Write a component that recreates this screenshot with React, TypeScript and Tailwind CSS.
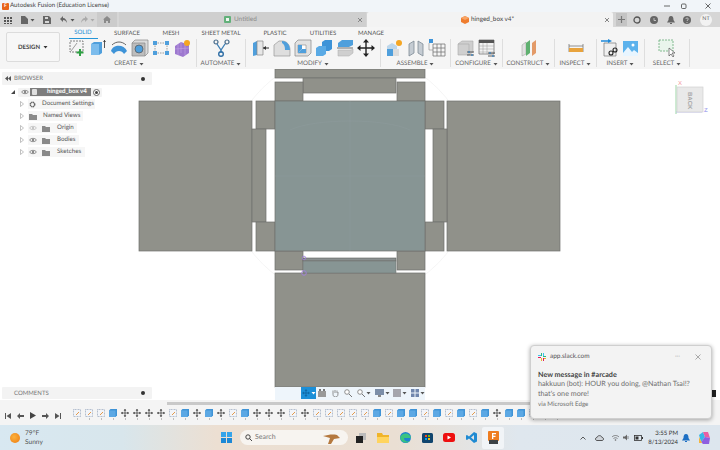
import type { ReactNode } from "react";

const FONT = "[font-family:'Lato','Liberation_Sans',sans-serif] [text-rendering:geometricPrecision]";

function Ico({ children, w = 18, h = 18, vb, className = "" }: { children: ReactNode; w?: number; h?: number; vb?: string; className?: string }) {
  return (
    <svg width={w} height={h} viewBox={vb ?? `0 0 ${w} ${h}`} className={`shrink-0 ${className}`}>
      {children}
    </svg>
  );
}

function Caret({ color = "#555" }: { color?: string }) {
  return (
    <svg width="5" height="4" viewBox="0 0 5 4" className="shrink-0">
      <path d="M0.5 1h4L2.5 3.5z" fill={color} />
    </svg>
  );
}

function SketchIcon() {
  return (
    <Ico>
      <path d="M2 2h13v11H2z" fill="#f4f4f4" stroke="#666" strokeDasharray="2 1" strokeWidth="0.8" />
      <path d="M3 12 9 4" stroke="#888" strokeWidth="0.8" />
      <path d="M12 10v7M8.500 13.500h7" stroke="#2ea043" strokeWidth="2" />
    </Ico>
  );
}

function ExtrudeIcon() {
  return (
    <Ico>
      <path d="M2 5 5 3h8v11l-3 2H2z" fill="#4f9fdc" />
      <path d="M2 5h8v11H2z" fill="#7cbcec" />
      <path d="M15.500 1v8" stroke="#444" strokeWidth="0.9" />
      <path d="M14 3l1.500-2L17 3z" fill="#444" />
    </Ico>
  );
}

function Elbow() {
  return (
    <Ico>
      <path d="M1 12C3 5 14 5 17 12l-3 3C12 11 6 11 4 15z" fill="#3f94d8" />
      <path d="M2 6C6 2 12 2 16 6" stroke="#555" fill="none" strokeWidth="0.9" />
    </Ico>
  );
}

function HoleIcon() {
  return (
    <Ico>
      <path d="M1 4l3-3h13v13l-3 3z" fill="#dcdcdc" stroke="#888" strokeWidth="0.7" />
      <path d="M1 4h13v13H1z" fill="#bdbdbd" stroke="#888" strokeWidth="0.7" />
      <circle cx="8" cy="10" r="4" fill="#4f9fdc" stroke="#555" strokeWidth="0.7" />
    </Ico>
  );
}

function PointsIcon() {
  return (
    <Ico>
      <path d="M3 4h12M3 14h12M3 4v10M15 4v10" stroke="#777" strokeDasharray="1.500 1" strokeWidth="0.7" />
      <rect x="1" y="2" width="4" height="4" fill="#4f9fdc" />
      <rect x="13" y="2" width="4" height="4" fill="#4f9fdc" />
      <rect x="1" y="12" width="4" height="4" fill="#4f9fdc" />
      <rect x="13" y="12" width="4" height="4" fill="#4f9fdc" />
    </Ico>
  );
}

function FormIcon() {
  return (
    <Ico>
      <path d="M2 7 8 3l8 3v8l-6 4-8-3z" fill="#9d78cf" />
      <path d="M8 3v11M2 10l14-1M5 5v11M12 4v12" stroke="#c3a6e6" strokeWidth="0.6" />
      <circle cx="14" cy="4" r="3" fill="#f5a623" />
    </Ico>
  );
}

function Automate() {
  return (
    <Ico>
      <circle cx="4" cy="3" r="2" fill="none" stroke="#4a6d8c" strokeWidth="1.200" />
      <circle cx="15" cy="3" r="2" fill="none" stroke="#4a6d8c" strokeWidth="1.200" />
      <path d="M5 5l4 6 4-6" fill="none" stroke="#3d7fb5" strokeWidth="1.300" />
      <path d="M9 11v3" stroke="#3d7fb5" strokeWidth="1.300" />
      <circle cx="9" cy="15" r="2.300" fill="none" stroke="#2f6ea5" strokeWidth="1.400" />
    </Ico>
  );
}

function PressPull() {
  return (
    <Ico>
      <path d="M1 4l4-2v14l-4 1z" fill="#4f9fdc" />
      <path d="M5 2h6v14H5z" fill="#e7e7e7" stroke="#888" strokeWidth="0.7" />
      <path d="M11 9h6" stroke="#333" strokeWidth="1" />
      <path d="M11 9l3-2v4z" fill="#333" />
    </Ico>
  );
}

function Fillet() {
  return (
    <Ico>
      <path d="M1 17V6l5-4h3c5 0 8 4 8 9v6z" fill="#dedede" stroke="#999" strokeWidth="0.7" />
      <path d="M9 2c5 0 8 4 8 9h-5C12 7 11 5 9 4z" fill="#4f9fdc" />
    </Ico>
  );
}

function Shell() {
  return (
    <Ico>
      <path d="M1 4l3-3h13v13l-3 3H1z" fill="#e2e2e2" stroke="#888" strokeWidth="0.7" />
      <path d="M4 6h8v8H4z" fill="#fff" stroke="#888" strokeWidth="0.6" />
      <path d="M4 14l4-4h4v4z" fill="#4f9fdc" />
      <path d="M4 6v8l4-4V6z" fill="#4f9fdc" />
    </Ico>
  );
}

function Combine() {
  return (
    <Ico>
      <path d="M7 3l3-2h7v9l-3 2H7z" fill="#3d93d8" />
      <path d="M1 9l3-2h7v8l-3 2H1z" fill="#5aaae5" />
    </Ico>
  );
}

function SplitFace() {
  return (
    <Ico>
      <path d="M2 4l4-3h11v5l-4 2H2z" fill="#4f9fdc" />
      <path d="M1 9h16" stroke="#9a9a9a" strokeWidth="1.500" />
      <path d="M2 11h13l2-1v4l-4 3H2z" fill="#cfcfcf" stroke="#aaa" strokeWidth="0.5" />
    </Ico>
  );
}

function MoveIcon({ size = 18 }: { size?: number }) {
  return (
    <Ico w={size} h={size} vb="0 0 18 18">
      <path d="M9 1v16M1 9h16" stroke="#222" strokeWidth="1.400" />
      <path d="M9 0l3 3.500H6zM9 18l3-3.500H6zM0 9l3.500-3v6zM18 9l-3.500-3v6z" fill="#222" />
    </Ico>
  );
}

function NewComponent() {
  return (
    <Ico>
      <path d="M1 7l5-3 5 3v9H1z" fill="#bdd6ea" />
      <path d="M1 10h6v7H1z" fill="#4f9fdc" />
      <path d="M7 10h6v7H7z" fill="#ddd" />
      <circle cx="13" cy="4" r="3" fill="#f5a623" />
    </Ico>
  );
}

function Joint() {
  return (
    <Ico>
      <path d="M2 5l5-3v12l-5 3zM16 5l-5-3v12l5 3z" fill="#c5ccd3" stroke="#7d8a96" strokeWidth="0.8" />
    </Ico>
  );
}

function TableIcon() {
  return (
    <Ico>
      <rect x="1" y="0" width="4" height="4" fill="#3d93d8" />
      <path d="M5 5h12v12H5zM5 9h12M5 13h12M9 5v12M13 5v12" fill="none" stroke="#777" strokeWidth="0.8" />
      <path d="M1 4v7h4" fill="none" stroke="#888" strokeWidth="0.6" />
    </Ico>
  );
}

function ConfigBox() {
  return (
    <Ico>
      <path d="M1 5l4-3h11v11l-4 3H1z" fill="#cfcfcf" stroke="#aaa" strokeWidth="0.6" />
      <path d="M1 5h11v11" fill="none" stroke="#aaa" strokeWidth="0.6" />
      <path d="M10 13h7M10 16h7" stroke="#333" strokeWidth="0.8" />
      <path d="M12 12v2M15 15v2" stroke="#2f7fc1" strokeWidth="1.200" />
    </Ico>
  );
}

function ConfigTable() {
  return (
    <Ico>
      <path d="M1 1h15v14H1z" fill="#f3f3f3" stroke="#666" strokeWidth="0.7" />
      <path d="M1 1h15v3H1z" fill="#555" />
      <path d="M1 7h15M1 10h15M1 13h15M5 4v11M9 4v11" stroke="#999" strokeWidth="0.5" />
      <path d="M10 14h7M10 17h7" stroke="#333" strokeWidth="0.8" />
      <path d="M12 13v2M15 16v2" stroke="#2f7fc1" strokeWidth="1.200" />
    </Ico>
  );
}

function Planes() {
  return (
    <Ico>
      <path d="M2 6l4-3v12l-4 2z" fill="#e2e2e2" stroke="#999" strokeWidth="0.5" />
      <path d="M6 4l4-3v13l-4 3z" fill="#5fb070" />
      <path d="M12 4l4-3v13l-4 3z" fill="#e39a68" />
    </Ico>
  );
}

function Measure() {
  return (
    <Ico>
      <path d="M2 5v8M16 5v8M2 7h14" stroke="#777" strokeWidth="0.8" />
      <rect x="2" y="9" width="14" height="4" fill="#e8a33d" />
    </Ico>
  );
}

function InsertDerive() {
  return (
    <Ico>
      <path d="M3 4h12v13H3z" fill="#efefef" stroke="#777" strokeWidth="0.7" />
      <path d="M0 2h9" stroke="#1e88d8" strokeWidth="1.500" />
      <path d="M7 0l4 2-4 2z" fill="#1e88d8" />
      <circle cx="10" cy="14" r="2" fill="none" stroke="#222" strokeWidth="1.100" />
      <circle cx="14" cy="11" r="2" fill="none" stroke="#222" strokeWidth="1.100" />
    </Ico>
  );
}

function InsertImage() {
  return (
    <Ico>
      <rect x="1" y="2" width="15" height="15" fill="#5db2ec" />
      <circle cx="11" cy="6" r="1.500" fill="#fff" />
      <path d="M1 14l5-6 4 5 2-2 4 3v3H1z" fill="#e8f5ff" />
    </Ico>
  );
}

function SelectIcon() {
  return (
    <Ico>
      <rect x="1" y="1" width="14" height="11" fill="#e9f5ec" stroke="#67ab79" strokeDasharray="2 1" strokeWidth="0.8" />
      <path d="M11 9l0 8 2-2 2 3 1-1-2-3h3z" fill="#fff" stroke="#555" strokeWidth="0.7" />
    </Ico>
  );
}

const groups = [
  { label: "CREATE", w: "w-[135px]", icons: [<SketchIcon key="a" />, <ExtrudeIcon key="b" />, <Elbow key="c" />, <HoleIcon key="d" />, <PointsIcon key="e" />, <FormIcon key="f" />] },
  { label: "AUTOMATE", w: "w-[49px]", icons: [<Automate key="a" />] },
  { label: "MODIFY", w: "w-[135px]", icons: [<PressPull key="a" />, <Fillet key="b" />, <Shell key="c" />, <Combine key="d" />, <SplitFace key="e" />, <MoveIcon key="f" />] },
  { label: "ASSEMBLE", w: "w-[70px]", icons: [<NewComponent key="a" />, <Joint key="b" />, <TableIcon key="c" />] },
  { label: "CONFIGURE", w: "w-[52px]", icons: [<ConfigBox key="a" />, <ConfigTable key="b" />] },
  { label: "CONSTRUCT", w: "w-[52px]", icons: [<Planes key="a" />] },
  { label: "INSPECT", w: "w-[42px]", icons: [<Measure key="a" />] },
  { label: "INSERT", w: "w-[48px]", icons: [<InsertDerive key="a" />, <InsertImage key="b" />] },
  { label: "SELECT", w: "w-[45px]", icons: [<SelectIcon key="a" />] },
];

const tabs = [
  { label: "SOLID", w: "w-[42px]" },
  { label: "SURFACE", w: "w-[46px]" },
  { label: "MESH", w: "w-[42px]" },
  { label: "SHEET METAL", w: "w-[58px]" },
  { label: "PLASTIC", w: "w-[50px]" },
  { label: "UTILITIES", w: "w-[46px]" },
  { label: "MANAGE", w: "w-[50px]" },
];

function TitleBar() {
  return (
    <div className="flex h-[12px] items-center bg-[#f1f5f9] pl-[2px] text-[#444]">
      <div className="flex h-[7px] w-[7px] items-center justify-center rounded-[1px] bg-[#e8641b] text-[5px] font-bold leading-none text-white">F</div>
      <span className="ml-[1px] whitespace-nowrap text-[6.200px] leading-none">Autodesk Fusion (Education License)</span>
      <div className="ml-auto flex items-center">
        <Ico w={6} h={6}><path d="M0 3h6" stroke="#444" strokeWidth="0.8" /></Ico>
        <Ico w={6} h={6} className="ml-[11px]"><rect x="0.500" y="1" width="4.500" height="4.500" rx="1" fill="none" stroke="#444" strokeWidth="0.8" /></Ico>
        <Ico w={6} h={6} className="ml-[18px] mr-[9px]"><path d="M0.500 0.500l5 5M5.500 0.500l-5 5" stroke="#444" strokeWidth="0.8" /></Ico>
      </div>
    </div>
  );
}

function TabBar() {
  return (
    <div className="flex h-[15px] items-center bg-[#d6d6d6]">
      <div className="flex w-[97px] items-center pl-[4px]">
        <Ico w={8} h={8}><path d="M0 1h2v2H0zM3 1h2v2H3zM6 1h2v2H6zM0 4h2v2H0zM3 4h2v2H3zM6 4h2v2H6zM0 7h2v1H0zM3 7h2v1H3zM6 7h2v1H6z" fill="#555" /></Ico>
        <Ico w={7} h={8} className="ml-[9px]"><path d="M0 0h4l3 3v5H0z" fill="#666" /></Ico>
        <span className="ml-[2px]"><Caret /></span>
        <Ico w={8} h={8} className="ml-[8px]"><path d="M0 0h6l2 2v6H0z" fill="#666" /><path d="M2 1h3v2H2zM2 5h4v2H2z" fill="#d6d6d6" /></Ico>
        <Ico w={8} h={7} className="ml-[9px]"><path d="M3 0 0 3l3 3V4c2 0 3 1 4 3 0-3-2-5-4-5z" fill="#666" /></Ico>
        <span className="ml-[2px]"><Caret /></span>
        <Ico w={8} h={7} className="ml-[5px]"><path d="M5 0l3 3-3 3V4C3 4 2 5 1 7c0-3 2-5 4-5z" fill="#aaa" /></Ico>
        <span className="ml-[2px]"><Caret color="#aaa" /></span>
      </div>
      <div className="flex h-full w-[20px] items-center justify-center bg-[#cbcbcb]">
        <Ico w={8} h={7}><path d="M4 0l4 3.500H7V7H5V5H3v2H1V3.500H0z" fill="#8a8a8a" /></Ico>
      </div>
      <div className="ml-[2px] flex h-full w-[247px] items-center bg-[#cfcfcf] pr-[3px]">
        <div className="ml-[105px] flex items-center gap-[3px] text-[6.400px] text-[#8b8b8b]">
          <span className="h-[7px] w-[7px] rounded-[1px] border-[2px] border-[#62b07a] bg-[#eef5ef]" />
          Untitled
        </div>
        <Ico w={6} h={6} className="ml-auto"><path d="M1 1l4 4M5 1L1 5" stroke="#666" strokeWidth="0.7" /></Ico>
      </div>
      <div className="ml-[1px] flex h-full w-[246px] items-center rounded-t-[2px] bg-[#f3f3f3] pr-[3px]">
        <Ico w={8} h={8} className="ml-[94px]"><path d="M4 0l4 2v4L4 8 0 6V2z" fill="#ef7d2e" /><path d="M0 2l4 2 4-2-4-2z" fill="#f8a566" /></Ico>
        <span className="ml-[2px] text-[6.400px] text-[#444]">hinged_box v4*</span>
        <Ico w={6} h={6} className="ml-auto"><path d="M1 1l4 4M5 1L1 5" stroke="#555" strokeWidth="0.7" /></Ico>
      </div>
      <div className="ml-[3px] flex h-[13px] w-[11px] items-center justify-center bg-[#c4c4c4]">
        <Ico w={7} h={7}><path d="M3.500 0v7M0 3.500h7" stroke="#777" strokeWidth="1.200" /></Ico>
      </div>
      <div className="ml-[6px] flex items-center">
        <Ico w={8} h={8}><circle cx="4" cy="4" r="3" fill="none" stroke="#555" strokeWidth="1.300" /></Ico>
        <Ico w={8} h={8} className="ml-[9px]"><circle cx="4" cy="4" r="4" fill="#666" /><path d="M4 2v2.500h2" stroke="#d6d6d6" strokeWidth="0.8" fill="none" /></Ico>
        <Ico w={8} h={8} className="ml-[9px]"><path d="M4 0c2 0 2.500 2 2.500 4L8 6.500H0L1.500 4C1.500 2 2 0 4 0zM3 7h2v1H3z" fill="#666" /></Ico>
        <Ico w={8} h={8} className="ml-[8px]"><circle cx="4" cy="4" r="4" fill="#666" /><path d="M2.800 3c0-1.500 2.500-1.500 2.500 0 0 1-1.300 1-1.300 2M4 6v1" stroke="#d6d6d6" strokeWidth="0.8" fill="none" /></Ico>
        <div className="ml-[9px] flex h-[12px] w-[12px] items-center justify-center rounded-full bg-[#f2f2f2] text-[5.400px] text-[#666]">NT</div>
      </div>
    </div>
  );
}

function Toolbar() {
  return (
    <div className="flex h-[42px] bg-[#f5f5f5]">
      <div className="ml-[6px] mt-[5px] flex h-[30px] w-[54px] items-center justify-center gap-[3px] rounded-[2px] border border-[#dcdcdc] bg-[#f7f7f7] text-[6px] font-bold text-[#444]">
        DESIGN <Caret color="#333" />
      </div>
      <div className="ml-[2px] flex flex-col">
        <div className="flex h-[12px]">
          {tabs.map((t, i) => (
            <div key={t.label} className={`${t.w} flex h-full items-end justify-center`}>
              <span className={`px-[3px] pb-[1px] text-[6px] leading-[8px] ${i === 0 ? "w-[29px] border-b-[1px] border-[#2596d8] text-center text-[#1d8fd6]" : "text-[#555]"}`}>{t.label}</span>
            </div>
          ))}
        </div>
        <div className="flex h-[30px]">
          {groups.map((g) => (
            <div key={g.label} className={`${g.w} flex h-[28px] flex-col items-center border-r border-[#dedede]`}>
              <div className="flex h-[19px] items-center">
                {g.icons.map((ic, i) => (
                  <div key={i} className="flex w-[21px] justify-center">{ic}</div>
                ))}
              </div>
              <div className="mt-[3px] flex items-center gap-[2px] whitespace-nowrap text-[6.200px] leading-[7px] text-[#666]">
                {g.label} <Caret />
              </div>
            </div>
          ))}
        </div>
      </div>
    </div>
  );
}

function Eye({ faded = false }: { faded?: boolean }) {
  const c = faded ? "#b5b5b5" : "#666";
  return (
    <Ico w={8} h={6}>
      <path d="M0.500 3C2 0.800 6 0.800 7.500 3 6 5.200 2 5.200 0.500 3z" fill="none" stroke={c} strokeWidth="0.7" />
      <circle cx="4" cy="3" r="1" fill={c} />
    </Ico>
  );
}

function Folder() {
  return (
    <Ico w={8} h={7}>
      <path d="M0 1h3l1 1h4v5H0z" fill="#8a8a8a" />
    </Ico>
  );
}

function Arrow() {
  return (
    <Ico w={4} h={6}>
      <path d="M0.500 0.500 3.500 3 0.500 5.500z" fill="none" stroke="#999" strokeWidth="0.6" />
    </Ico>
  );
}

const treeRows = [
  { label: "Origin", faded: true, chip: "w-[49px]" },
  { label: "Bodies", faded: false, chip: "w-[51px]" },
  { label: "Sketches", faded: false, chip: "w-[57px]" },
];

function Browser() {
  return (
    <div className="absolute left-[2px] top-[3px] w-[150px] whitespace-nowrap text-[6.200px] text-[#555]">
      <div className="flex h-[13px] items-center rounded-[1px] bg-[#f3f3f3] px-[3px] text-[#777]">
        <Ico w={6} h={5}><path d="M3 0v5L0 2.500zM6 0v5L3 2.500z" fill="#555" /></Ico>
        <span className="ml-[3px] text-[6px]">BROWSER</span>
        <span className="ml-auto mr-[4px] h-[4px] w-[4px] rounded-full bg-[#333]" />
      </div>
      <div className="mt-[1px] flex h-[12px] items-center pl-[9px]">
        <Ico w={4} h={4}><path d="M4 0v4H0z" fill="#444" /></Ico>
        <div className="ml-[3px] flex h-[9px] items-center rounded-[1px] bg-[#f3f3f3] pl-[3px]">
          <Eye />
          <div className="ml-[1px] flex h-[8px] w-[61px] items-center bg-[#7d7d7d] pl-[2px] text-white">
            <span className="h-[6px] w-[5px] rounded-[1px] bg-[#e0e0e0]" />
            <span className="ml-[10px] text-[6.200px] font-bold leading-none">hinged_box v4</span>
          </div>
          <div className="mx-[2px] flex h-[7px] w-[7px] items-center justify-center rounded-full border border-[#666] bg-white">
            <span className="h-[3px] w-[3px] rounded-full bg-[#444]" />
          </div>
        </div>
      </div>
      <div className="flex h-[12px] items-center pl-[18px]">
        <Arrow />
        <div className="ml-[4px] flex h-[10px] w-[67px] items-center bg-[#f6f6f6] pl-[1px]">
          <Ico w={7} h={7}><circle cx="3.500" cy="3.500" r="2.200" fill="none" stroke="#666" strokeWidth="1.500" strokeDasharray="1.200 0.400" /></Ico>
          <span className="ml-[6px]">Document Settings</span>
        </div>
      </div>
      <div className="flex h-[12px] items-center pl-[18px]">
        <Arrow />
        <div className="ml-[4px] flex h-[10px] w-[55px] items-center bg-[#f6f6f6] pl-[1px]">
          <Folder />
          <span className="ml-[6px]">Named Views</span>
        </div>
      </div>
      {treeRows.map((r) => (
        <div key={r.label} className="flex h-[12px] items-center pl-[18px]">
          <Arrow />
          <div className={`ml-[4px] flex h-[10px] ${r.chip} items-center bg-[#f6f6f6] pl-[1px]`}>
            <Eye faded={r.faded} />
            <span className="ml-[5px]"><Folder /></span>
            <span className="ml-[7px]">{r.label}</span>
          </div>
        </div>
      ))}
    </div>
  );
}

function Drawing() {
  const grey = "#90918a";
  const edge = "#6f716d";
  const top = "#879594";
  return (
    <svg className="absolute inset-0" width="720" height="331" viewBox="0 69 720 331">
      <circle cx="350" cy="176" r="124" fill="none" stroke="#f0f0f0" strokeWidth="0.7" />
      <g fill={grey} stroke={edge} strokeWidth="0.7">
        <rect x="275" y="69" width="150" height="9" />
        <rect x="303" y="78" width="93" height="15" />
        <rect x="275" y="82" width="28" height="19" />
        <rect x="397" y="82" width="28" height="19" />
        <rect x="139" y="101" width="113" height="150" />
        <rect x="447" y="101" width="113" height="150" />
        <rect x="256" y="101" width="19" height="28" />
        <rect x="425" y="101" width="19" height="28" />
        <rect x="252" y="129" width="14" height="93" />
        <rect x="433" y="129" width="14" height="93" />
        <rect x="256" y="222" width="19" height="29" />
        <rect x="425" y="222" width="19" height="29" />
        <rect x="275" y="251" width="28" height="19" />
        <rect x="397" y="251" width="28" height="19" />
        <rect x="275" y="273" width="150" height="114" />
      </g>
      <rect x="275" y="101" width="150" height="150" fill={top} stroke={edge} strokeWidth="0.7" />
      <path d="M350 101v150M275 176h150" stroke="#8f9c9e" strokeWidth="0.4" />
      <path d="M290 130C315 118 385 118 410 130" fill="none" stroke="#8f9c9e" strokeWidth="0.4" />
      <rect x="303" y="258" width="93" height="3" fill="#8a9090" stroke="#5e615e" strokeWidth="0.6" />
      <rect x="303" y="261" width="93" height="12" fill={top} stroke={edge} strokeWidth="0.5" />
      <circle cx="304" cy="258" r="1.800" fill="none" stroke="#a27fdc" strokeWidth="0.8" />
      <circle cx="304" cy="273" r="2.300" fill="none" stroke="#a27fdc" strokeWidth="0.9" />
      <path d="M676 85v29" stroke="#8fd39a" strokeWidth="0.9" />
      <path d="M676 112h26" stroke="#a9a9ee" strokeWidth="0.7" />
      <rect x="677" y="87" width="26" height="25" fill="#e9e9e9" stroke="#d2d2d2" strokeWidth="0.7" />
      <text transform="translate(688 92) rotate(90)" fontSize="6" fontWeight="700" fontFamily="Liberation Sans" fill="#a5a5a5">BACK</text>
      <text x="678" y="85" fontSize="6" fontFamily="Liberation Sans" fill="#f29a9a">X</text>
      <text x="704" y="112" fontSize="6" fontWeight="700" fontFamily="Liberation Sans" fill="#a9a9ee">Z</text>
    </svg>
  );
}

function NavBar() {
  return (
    <div className="absolute left-[275px] top-[318px] flex h-[13px] w-[150px] items-start bg-[#eef5fb]">
      <div className="ml-[26px] flex h-[12px] w-[16px] items-center justify-center gap-[1px] bg-[#1b8fd8]">
        <Ico w={8} h={8}><path d="M4 0l1.500 2h-1v1.500H6V2.500l2 1.500-2 1.500V4.500H4.500V6h1L4 8 2.500 6h1V4.500H2v1L0 4l2-1.500v1h1.500V2h-1z" fill="#0f6aa8" /></Ico>
        <Caret color="#fff" />
      </div>
      <div className="mt-[2px] flex items-center text-[#888]">
        <Ico w={8} h={8} className="ml-[2px]"><path d="M0 2h8v6H0z" fill="#999" /><path d="M1 0h2v2H1zM5 0h2v2H5z" fill="#777" /></Ico>
        <Ico w={8} h={8} className="ml-[5px]"><path d="M2 4V1.500M4 4V1M6 4V1.500M2 4c0 2 0 4 2.500 4S7 6 7 3" fill="none" stroke="#777" strokeWidth="0.8" /></Ico>
        <Ico w={8} h={8} className="ml-[5px]"><circle cx="3" cy="3" r="2.300" fill="#fff" stroke="#777" strokeWidth="0.8" /><path d="M5 5l3 3" stroke="#777" strokeWidth="1" /></Ico>
        <Ico w={8} h={8} className="ml-[5px]"><circle cx="3" cy="3" r="2.300" fill="#fff" stroke="#777" strokeWidth="0.8" /><path d="M5 5l3 3" stroke="#777" strokeWidth="1" /></Ico>
        <span className="ml-[1px]"><Caret /></span>
        <Ico w={9} h={8} className="ml-[4px]"><rect x="0" y="0" width="9" height="6" fill="#7c8ea8" /><path d="M3 8h3V6H3z" fill="#888" /></Ico>
        <span className="ml-[1px]"><Caret /></span>
        <Ico w={8} h={8} className="ml-[3px]"><rect width="8" height="8" fill="#a5a5ac" /></Ico>
        <span className="ml-[1px]"><Caret /></span>
        <Ico w={8} h={8} className="ml-[4px]"><path d="M0 0h3.500v3.500H0zM4.500 0H8v3.500H4.500zM0 4.500h3.500V8H0zM4.500 4.500H8V8H4.500z" fill="#6f86ad" /></Ico>
        <span className="ml-[1px]"><Caret /></span>
      </div>
    </div>
  );
}

// s = sketch, b = body, m = move, in timeline order
const timeline = "sssbmmmmsbmbmsbmmmsmsssssbsbbsbsbsbmbbsbs";

function TimelineStep({ kind }: { kind: string }) {
  return (
    <div className="flex w-[12px] flex-col items-center">
      {kind === "m" ? (
        <MoveIcon size={8} />
      ) : kind === "b" ? (
        <Ico w={8} h={8}><path d="M0 1.500 1.500 0H8v6.500L6.500 8H0z" fill="#3f93d6" /><path d="M0 1.500h6.500V8H0z" fill="#5ca8e4" /></Ico>
      ) : (
        <Ico w={8} h={8}><path d="M0.500 0.500h7v7h-7z" fill="#f2f4f8" stroke="#8a9ab5" strokeWidth="0.6" strokeDasharray="1 0.500" /><path d="M3 6l3-3" stroke="#e59a4a" strokeWidth="1" /></Ico>
      )}
      <span className="mt-[1px] h-[2px] w-[1px] bg-[#bdbdbd]" />
    </div>
  );
}

function Timeline() {
  return (
    <div className="flex h-[25px] flex-col bg-[#f4f4f4]">
      <div className="ml-[167px] mt-[2px] h-[3px] w-[380px] bg-[#c9c9c9]" />
      <div className="mt-[4px] flex items-start">
        <div className="ml-[5px] flex w-[65px] items-center gap-[6px] pt-[3px]">
          <Ico w={6} h={6}><path d="M0 0h1v6H0zM6 0v6L1.500 3z" fill="#555" /></Ico>
          <Ico w={7} h={6}><path d="M3 0v2h4v2H3v2L0 3z" fill="#555" /></Ico>
          <Ico w={6} h={7}><path d="M0 0v7l6-3.500z" fill="#444" /></Ico>
          <Ico w={7} h={6}><path d="M4 0v2H0v2h4v2l3-3z" fill="#555" /></Ico>
          <Ico w={6} h={6}><path d="M6 0H5v6h1zM0 0v6l4.500-3z" fill="#555" /></Ico>
        </div>
        <div className="ml-[1px] flex">
          {timeline.split("").map((k, i) => (
            <TimelineStep key={i} kind={k} />
          ))}
        </div>
      </div>
    </div>
  );
}

function TaskApp({ children, active = false }: { children: ReactNode; active?: boolean }) {
  return <div className={`flex h-[22px] w-[22px] items-center justify-center rounded-[2px] ${active ? "bg-[#f1f4f7]" : ""}`}>{children}</div>;
}

function Taskbar() {
  return (
    <div className="flex h-[25px] items-center bg-[linear-gradient(90deg,#d8e8f1_0%,#d8e6ec_17%,#ecdfd2_30%,#eadfd3_55%,#dfe7ee_72%,#dde6ee_100%)]">
      <div className="ml-[10px] h-[10px] w-[10px] rounded-full bg-[radial-gradient(circle_at_40%_40%,#fbb13c,#ee7a10)]" />
      <div className="ml-[5px] flex w-[60px] flex-col text-[6.600px] leading-[9px] text-[#555]">
        <span>79°F</span>
        <span>Sunny</span>
      </div>
      <div className="ml-[136px] grid h-[11px] w-[11px] grid-cols-2 gap-[1px]">
        <span className="bg-[#35a4ea]" />
        <span className="bg-[#35a4ea]" />
        <span className="bg-[#1d88d6]" />
        <span className="bg-[#1d88d6]" />
      </div>
      <div className="ml-[8px] flex h-[15px] w-[108px] items-center rounded-full bg-[#f7f4f0] pl-[5px]">
        <Ico w={7} h={7}><circle cx="3" cy="3" r="2.200" fill="none" stroke="#333" strokeWidth="0.9" /><path d="M4.600 4.600 7 7" stroke="#333" strokeWidth="0.9" /></Ico>
        <span className="ml-[3px] text-[7px] text-[#777]">Search</span>
        <Ico w={24} h={12} className="ml-auto mr-[3px]"><path d="M2 4c5-1 9-2 14-1l3 3-6 1-3 5H7l2-6z" fill="#b5793f" /></Ico>
      </div>
      <div className="ml-[2px] flex">
        <TaskApp><Ico w={10} h={10}><rect x="3" y="0" width="7" height="7" fill="#bbb" /><rect x="0" y="3" width="7" height="7" fill="#222" /></Ico></TaskApp>
        <TaskApp><Ico w={12} h={10}><path d="M0 0h5l1 2h6v8H0z" fill="#f0b429" /><rect x="0" y="4" width="12" height="6" fill="#ffd45e" /></Ico></TaskApp>
        <TaskApp><Ico w={11} h={11}><circle cx="5.500" cy="5.500" r="5.500" fill="#1d84d0" /><path d="M0 5.500C2 0 10 0 11 6H4c0 3 3 4 6 3-3 3-9 2-10-3.500z" fill="#39c481" /></Ico></TaskApp>
        <TaskApp><Ico w={11} h={11}><rect y="1" width="11" height="10" rx="1.500" fill="#10456e" /><path d="M3 3h2v2H3z" fill="#f25022" /><path d="M6 3h2v2H6z" fill="#7fba00" /><path d="M3 6h2v2H3z" fill="#00a4ef" /><path d="M6 6h2v2H6z" fill="#ffb900" /></Ico></TaskApp>
        <TaskApp><Ico w={12} h={9}><rect width="12" height="9" rx="2.500" fill="#ee0f0f" /><path d="M4.500 2.500v4L8 4.500z" fill="#fff" /></Ico></TaskApp>
        <TaskApp><Ico w={11} h={11}><path d="M8 0l3 1.500v8L8 11 3 6.500 1 8 0 7.500v-4L1 3l2 1.500zM8 3 5 5.500 8 8z" fill="#1f8ad2" /></Ico></TaskApp>
        <TaskApp active><Ico w={11} h={13}><rect width="11" height="10" rx="1" fill="#ee7d21" /><rect x="1" y="9" width="9" height="4" fill="#3c4246" /><path d="M4 2h4v1.300H5.300v1.400H7.500V6H5.300v2H4z" fill="#fff" /></Ico></TaskApp>
      </div>
      <div className="ml-auto flex items-center text-[#333]">
        <Ico w={6} h={4}><path d="M0.500 3.500 3 1l2.500 2.500" fill="none" stroke="#333" strokeWidth="0.8" /></Ico>
        <Ico w={9} h={7} className="ml-[9px]"><path d="M2 6.500C0 6.500 0 3.500 2 3.500 2.500 1 6.500 1 7 3.500c2 0 2 3 0 3z" fill="#cfd4da" stroke="#333" strokeWidth="0.8" /></Ico>
        <Ico w={7} h={6} className="ml-[8px]"><path d="M0 2c2-2 5-2 7 0M1.500 3.500c1.500-1 2.500-1 4 0" fill="none" stroke="#666" strokeWidth="0.8" /><circle cx="3.500" cy="5" r="0.800" fill="#666" /></Ico>
        <Ico w={6} h={7} className="ml-[4px]"><path d="M0 2.500h2L4 0.500v6l-2-2H0z" fill="#666" /><path d="M5 2v3" stroke="#666" strokeWidth="0.7" /></Ico>
        <Ico w={9} h={6} className="ml-[5px]"><rect x="0.500" y="0.500" width="7" height="5" fill="none" stroke="#333" strokeWidth="0.8" /><rect x="1.500" y="1.500" width="3" height="3" fill="#333" /><rect x="8" y="2" width="1" height="2" fill="#333" /></Ico>
        <div className="flex w-[35px] flex-col items-end whitespace-nowrap text-[6px] leading-[9px] text-[#333]">
          <span>3:55 PM</span>
          <span>8/13/2024</span>
        </div>
        <Ico w={8} h={8} className="ml-[4px]"><path d="M4 0c2 0 2.500 2 2.500 4L8 6.500H0L1.500 4C1.500 2 2 0 4 0zM3 7h2v1H3z" fill="#1d6fc4" /></Ico>
        <Ico w={12} h={12} className="ml-[8px] mr-[10px]"><path d="M1 3l4-3 2 5-4 5z" fill="#37b7e8" /><path d="M5 0h5l2 6-5-1z" fill="#ea5fa2" /><path d="M3 10l4-5 5 1-1 6H5z" fill="#8e5fe0" /><path d="M1 5l3 6H1z" fill="#f4b63f" /></Ico>
      </div>
    </div>
  );
}

function SlackLogo() {
  return (
    <Ico w={8} h={8}>
      <path d="M0 3h3V2H0zM5 0v3h1V0z" fill="#36c5f0" />
      <path d="M3 0h1v3H3zM5 3h3v1H5z" fill="#2eb67d" />
      <path d="M5 5h3v1H5zM4 5v3H3V5z" fill="#ecb22e" />
      <path d="M0 4h3v1H0zM5 5v3h1V5z" fill="#e01e5a" />
    </Ico>
  );
}

function Notification() {
  return (
    <div className="absolute left-[530px] top-[345px] h-[74px] w-[182px] whitespace-nowrap rounded-[4px] border border-[#cfcfcf] bg-[#f3f3f3] px-[7px] pt-[6px] text-[7.200px] leading-[9.400px] text-[#6e6e6e] shadow-[0_1px_4px_rgba(0,0,0,0.35)]">
      <div className="flex h-[9px] items-center text-[6.500px] text-[#555]">
        <SlackLogo />
        <span className="ml-[4px]">app.slack.com</span>
        <span className="ml-auto mr-[15px] text-[#aaa]">···</span>
        <Ico w={6} h={6} className="mr-[3px]"><path d="M0.500 0.500l5 5M5.500 0.500l-5 5" stroke="#888" strokeWidth="0.7" /></Ico>
      </div>
      <div className="mt-[9px] text-[7.200px] font-bold text-[#444]">New message in #arcade</div>
      <div>hakkuun (bot): HOUR you doing, @Nathan Tsai!?</div>
      <div>that&apos;s one more!</div>
      <div className="mt-[2px] text-[6.200px]">via Microsoft Edge</div>
    </div>
  );
}

export default function App() {
  return (
    <div className={`relative flex h-[450px] w-[720px] flex-col overflow-hidden bg-white ${FONT}`}>
      <TitleBar />
      <TabBar />
      <Toolbar />
      <div className="relative h-[331px] bg-white">
        <Drawing />
        <Browser />
        <div className="absolute left-[2px] top-[318px] flex h-[12px] w-[150px] items-center rounded-[1px] bg-[#f3f3f3] pl-[12px] text-[6px] text-[#777]">
          COMMENTS
          <span className="ml-auto mr-[7px] h-[4px] w-[4px] rounded-full bg-[#333]" />
        </div>
        <NavBar />
      </div>
      <Timeline />
      <Taskbar />
      <div className="absolute left-[712px] top-[390px] h-[7px] w-[4px] bg-[#222]" />
      <Notification />
    </div>
  );
}
